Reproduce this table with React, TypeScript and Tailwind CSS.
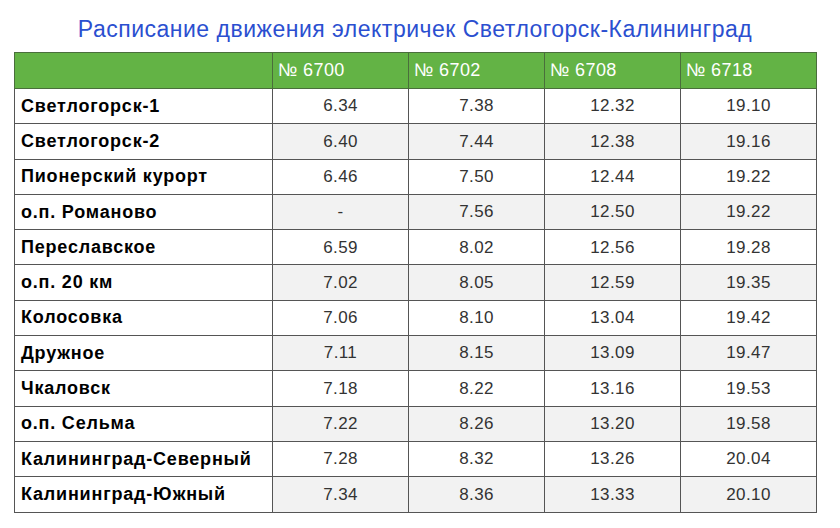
import React from "react";

const trains = ["№ 6700", "№ 6702", "№ 6708", "№ 6718"];

const rows: [string, string, string, string, string][] = [
  ["Светлогорск-1", "6.34", "7.38", "12.32", "19.10"],
  ["Светлогорск-2", "6.40", "7.44", "12.38", "19.16"],
  ["Пионерский курорт", "6.46", "7.50", "12.44", "19.22"],
  ["о.п. Романово", "-", "7.56", "12.50", "19.22"],
  ["Переславское", "6.59", "8.02", "12.56", "19.28"],
  ["о.п. 20 км", "7.02", "8.05", "12.59", "19.35"],
  ["Колосовка", "7.06", "8.10", "13.04", "19.42"],
  ["Дружное", "7.11", "8.15", "13.09", "19.47"],
  ["Чкаловск", "7.18", "8.22", "13.16", "19.53"],
  ["о.п. Сельма", "7.22", "8.26", "13.20", "19.58"],
  ["Калининград-Северный", "7.28", "8.32", "13.26", "20.04"],
  ["Калининград-Южный", "7.34", "8.36", "13.33", "20.10"],
];

export default function App() {
  return (
    <div className="w-[840px] h-[528px] bg-white font-['Liberation_Sans',Arial,sans-serif]">
      <div className="ml-[14px] w-[802px] pt-[16px]">
        {/* Title */}
        <h1 className="text-center text-[23px] tracking-[0.5px] leading-[26px] text-[#2b4fd0] mb-[10px]">
          Расписание движения электричек Светлогорск-Калининград
        </h1>

        {/* Schedule table */}
        <table className="w-full border-collapse table-fixed border border-[#555]">
          <colgroup>
            <col className="w-[258px]" />
            <col className="w-[136px]" />
            <col className="w-[136px]" />
            <col className="w-[136px]" />
            <col className="w-[136px]" />
          </colgroup>
          <thead>
            <tr className="h-[36px] bg-[#63b345]">
              <th className="border border-[#4a6e3c]" />
              {trains.map((t) => (
                <th
                  key={t}
                  className="border border-[#4a6e3c] text-left font-normal text-white text-[18px] tracking-[0.4px] pl-[5px]"
                >
                  {t}
                </th>
              ))}
            </tr>
          </thead>
          <tbody>
            {rows.map((r, i) => (
              <tr key={r[0]} className="h-[35.3px]">
                <td className="border border-[#555] bg-white text-left font-bold text-black text-[18px] tracking-[0.8px] pl-[6px] whitespace-nowrap">
                  {r[0]}
                </td>
                {r.slice(1).map((v, j) => (
                  <td
                    key={j}
                    className={
                      "border border-[#555] text-center text-[17px] tracking-[0.4px] text-[#333] " +
                      (i % 2 === 1 ? "bg-[#f2f2f2]" : "bg-white")
                    }
                  >
                    {v}
                  </td>
                ))}
              </tr>
            ))}
          </tbody>
        </table>
      </div>
    </div>
  );
}
